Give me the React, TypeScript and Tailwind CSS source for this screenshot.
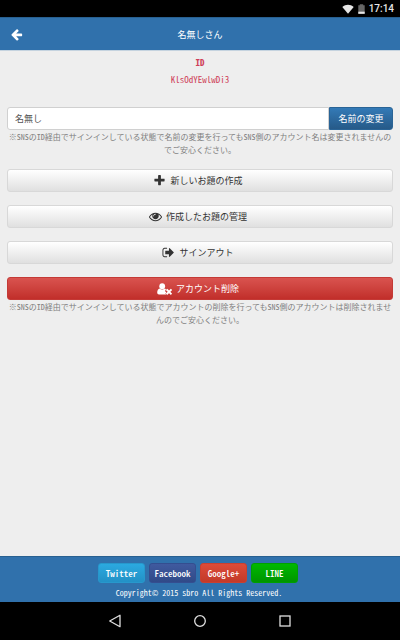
import type { ReactNode } from 'react';

const paths = {
  back: 'M1536 896v128q0 53-32.5 90.5t-84.5 37.5h-704l293 294q38 36 38 90t-38 90l-75 76q-37 37-90 37-52 0-91-37l-651-652q-37-37-37-90 0-52 37-91l651-650q38-38 91-38 52 0 90 38l75 74q38 38 38 91t-38 91l-293 293h704q52 0 84.5 37.5t32.5 90.5z',
  plus: 'M1600 736v192q0 40-28 68t-68 28h-416v416q0 40-28 68t-68 28h-192q-40 0-68-28t-28-68v-416h-416q-40 0-68-28t-28-68v-192q0-40 28-68t68-28h416v-416q0-40 28-68t68-28h192q40 0 68 28t28 68v416h416q40 0 68 28t28 68z',
  eye: 'M1664 960q-152-236-381-353 61 104 61 225 0 185-131.5 316.5t-316.5 131.5-316.5-131.5-131.5-316.5q0-121 61-225-229 117-381 353 133 205 333.5 326.5t434.5 121.5 434.5-121.5 333.5-326.5zm-720-384q0-20-14-34t-34-14q-125 0-214.5 89.5t-89.5 214.5q0 20 14 34t34 14 34-14 14-34q0-86 61-147t147-61q20 0 34-14t14-34zm848 384q0 34-20 69-140 230-376.5 368.5t-499.5 138.5-499.5-139-376.5-368q-20-35-20-69t20-69q140-229 376.5-368t499.5-139 499.5 139 376.5 368q20 35 20 69z',
  signOut:
    'M704 1440q0 4 1 20t.5 26.5-3 23.5-10 19.5-20.5 6.5h-320q-119 0-203.5-84.5t-84.5-203.5v-704q0-119 84.5-203.5t203.5-84.5h320q13 0 22.5 9.5t9.5 22.5q0 4 1 20t.5 26.5-3 23.5-10 19.5-20.5 6.5h-320q-66 0-113 47t-47 113v704q0 66 47 113t113 47h312l11.5 1 11.5 3 8 5.5 7 9 2 13.5zm928-544q0 26-19 45l-544 544q-19 19-45 19t-45-19-19-45v-288h-448q-26 0-45-19t-19-45v-384q0-26 19-45t45-19h448v-288q0-26 19-45t45-19 45 19l544 544q19 19 19 45z',
};

function Icon({ d, className }: { d: string; className: string }) {
  return (
    <svg viewBox="0 0 1792 1792" className={className} fill="currentColor" aria-hidden="true">
      <path d={d} />
    </svg>
  );
}

function UserTimesIcon() {
  return (
    <svg viewBox="0 0 15 12" className="h-3 w-[15px]" fill="currentColor" aria-hidden="true">
      <circle cx="5.2" cy="3.2" r="2.9" />
      <path d="M2.600 5.400C1 5.600.2 7.500.2 9.500c0 1.200.7 1.900 1.800 1.900h7.300L8.400 10.500l1-1-1.500-1.500L9 6.800C8.700 6 8.200 5.400 7.700 5.400 6.200 6.900 4.100 6.900 2.600 5.400z" />
      <path d="M10.200 7l3.600 3.600M13.800 7l-3.600 3.600" stroke="currentColor" strokeWidth="1.900" strokeLinecap="square" />
    </svg>
  );
}

function WideButton({ icon, children, danger = false }: { icon: ReactNode; children: ReactNode; danger?: boolean }) {
  const tone = danger
    ? 'border-[#c43a36] bg-linear-to-b from-[#d9534f] to-[#c12e2a] text-white'
    : 'border-[#d8d8d8] bg-linear-to-b from-white to-[#e0e0e0] text-[#333]';
  return (
    <button type="button" className={`flex h-[23px] w-full items-center justify-center gap-1 rounded-[3px] border pr-1 ${tone}`}>
      {icon}
      <span>{children}</span>
    </button>
  );
}

function Note({ children }: { children: ReactNode }) {
  return <p className="text-center text-[8px] leading-[13px] text-[#808080]">{children}</p>;
}

const shares = [
  { name: 'Twitter', tone: 'border-[#2798cc] from-[#2ba9e0] to-[#2391c6]' },
  { name: 'Facebook', tone: 'border-[#344e90] from-[#405a9f] to-[#304a88]' },
  { name: 'Google+', tone: 'border-[#c94030] from-[#dd4b39] to-[#c23a29]' },
  { name: 'LINE', tone: 'border-[#00a000] from-[#00b900] to-[#009500]' },
];

export default function App() {
  return (
    <div
      lang="ja"
      className="flex min-h-screen flex-col bg-[#eee] font-['Noto_Sans_CJK_JP',sans-serif] text-[9px] leading-[13px] text-[#333] [font-feature-settings:'hwid']"
    >
      <div className="flex h-[17px] items-center justify-end bg-black pr-[6px] text-[#e6e6e6]">
        <svg viewBox="0 0 12 10" className="mr-1 h-[10px] w-3" fill="currentColor" aria-hidden="true">
          <path d="M.3 3C3.700-.1 8.300-.1 11.700 3L6 9.700z" />
        </svg>
        <svg viewBox="0 0 7 10" className="mr-1 h-[10px] w-[7px]" aria-hidden="true">
          <path d="M.3 1.200h1.500V.2h3.400v1h1.500v8.600H.3z" fill="#666" />
          <path d="M.3 7.700h6.400v2.100H.3z" fill="currentColor" />
        </svg>
        <span className="font-[Roboto,sans-serif] text-[10px] font-medium">17:14</span>
      </div>

      <header className="grid h-[34px] grid-cols-[40px_1fr_40px] items-center border-t border-b border-t-[#286090] border-b-[#c5d3df] bg-[#3071ac] text-white">
        <button type="button" aria-label="戻る" className="flex h-full items-center pl-[11px]">
          <Icon d={paths.back} className="size-[13px]" />
        </button>
        <h1 className="text-center">名無しさん</h1>
      </header>

      <main className="flex-1 px-[7px] pt-[3px]">
        <dl className="text-center leading-[17px] text-[#cf3f59]">
          <dt className="font-bold">ID</dt>
          <dd>KlsOdYEwlwDi3</dd>
        </dl>

        <form className="mt-[19px]" onSubmit={(e) => e.preventDefault()}>
          <div className="flex h-[23px]">
            <input
              type="text"
              aria-label="名前"
              defaultValue="名無し"
              className="min-w-0 flex-1 rounded-l-[3px] border border-[#d0d0d0] bg-white px-[7px] text-[#555]"
            />
            <button
              type="submit"
              className="w-16 rounded-r-[3px] border border-[#2a6496] bg-linear-to-b from-[#337ab7] to-[#265a88] text-white"
            >
              名前の変更
            </button>
          </div>
          <Note>
            ※SNSのID経由でサインインしている状態で名前の変更を行ってもSNS側のアカウント名は変更されませんのでご安心ください。
          </Note>
        </form>

        <div className="mt-[13px] flex flex-col gap-[13px]">
          <WideButton icon={<Icon d={paths.plus} className="size-[13px]" />}>新しいお題の作成</WideButton>
          <WideButton icon={<Icon d={paths.eye} className="size-[13px]" />}>作成したお題の管理</WideButton>
          <WideButton icon={<Icon d={paths.signOut} className="size-[13px]" />}>サインアウト</WideButton>
          <div>
            <WideButton danger icon={<UserTimesIcon />}>
              アカウント削除
            </WideButton>
            <Note>
              ※SNSのID経由でサインインしている状態でアカウントの削除を行ってもSNS側のアカウントは削除されませんのでご安心ください。
            </Note>
          </div>
        </div>
      </main>

      <footer className="h-[46px] border-t border-[#286090] bg-[#3071ac] pt-[6px] text-center text-white">
        <div className="flex justify-center gap-1 pr-1">
          {shares.map((s) => (
            <button
              key={s.name}
              type="button"
              className={`h-5 w-[47px] rounded-[3px] border bg-linear-to-b font-medium ${s.tone}`}
            >
              {s.name}
            </button>
          ))}
        </div>
        <p className="mt-[3px] pr-0.5 text-[8px]">Copyright© 2015 sbro All Rights Reserved.</p>
      </footer>

      <nav aria-label="システム" className="flex h-[38px] items-center justify-center gap-[71px] bg-black text-[#e0e0e0]">
        <button type="button" aria-label="戻る">
          <svg viewBox="0 0 14 14" className="size-[14px]" fill="none" stroke="currentColor" strokeWidth="1.300">
            <path d="M12 1.300v11.400L1.700 7z" strokeLinejoin="round" />
          </svg>
        </button>
        <button type="button" aria-label="ホーム">
          <svg viewBox="0 0 14 14" className="size-[14px]" fill="none" stroke="currentColor" strokeWidth="1.300">
            <circle cx="7" cy="7" r="5.300" />
          </svg>
        </button>
        <button type="button" aria-label="アプリ履歴">
          <svg viewBox="0 0 14 14" className="size-[14px]" fill="none" stroke="currentColor" strokeWidth="1.300">
            <rect x="2" y="2" width="10" height="10" />
          </svg>
        </button>
      </nav>
    </div>
  );
}
